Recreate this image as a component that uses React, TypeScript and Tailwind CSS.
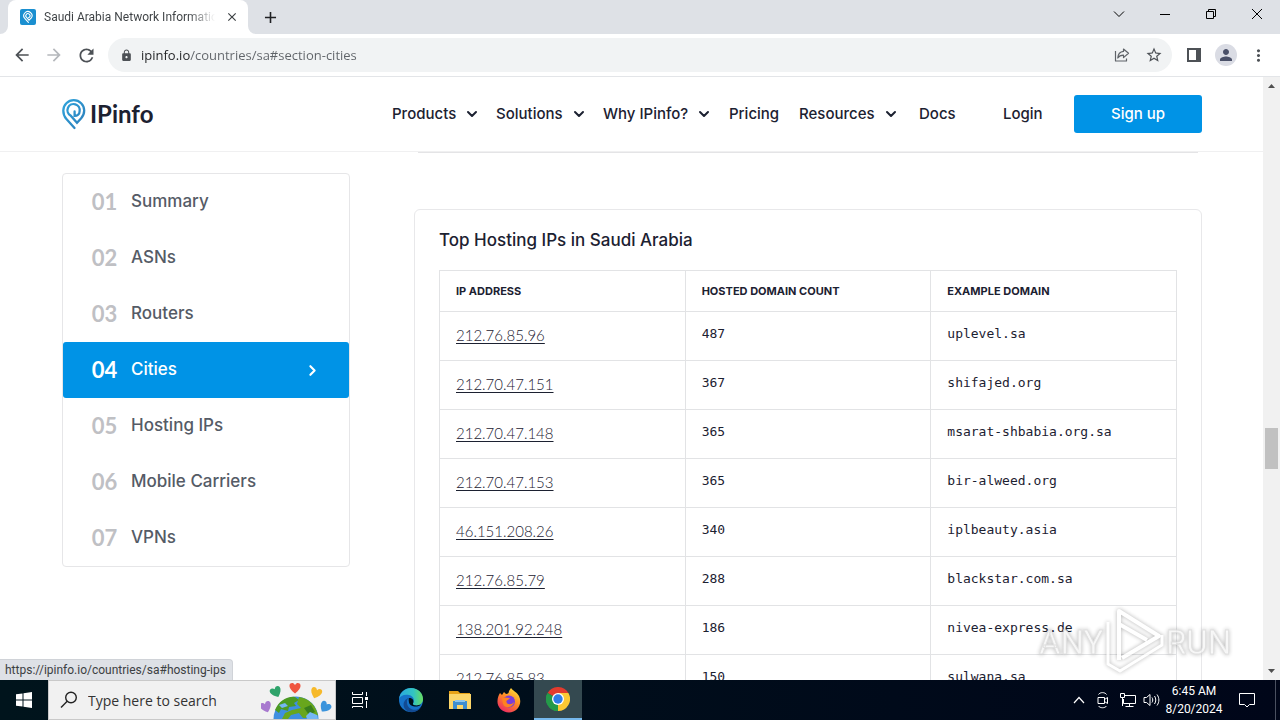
import type { ReactNode } from "react";
import { ChevronDown, ChevronRight } from "lucide-react";
import { MdAdd, MdArrowBack, MdArrowForward, MdClose, MdLock, MdMoreVert, MdPerson, MdRefresh, MdStarBorder } from "react-icons/md";

const navItems = [
    { label: "Products", menu: true, width: "w-[104px]" },
    { label: "Solutions", menu: true, width: "w-[107px]" },
    { label: "Why IPinfo?", menu: true, width: "w-[126px]" },
    { label: "Pricing", menu: false, width: "w-[70px]" },
    { label: "Resources", menu: true, width: "w-[120px]" },
    { label: "Docs", menu: false, width: "w-[84px]" },
    { label: "Login", menu: false, width: "w-[71px]" },
];

const sections = [
    { number: "01", label: "Summary", href: "#section-summary" },
    { number: "02", label: "ASNs", href: "#section-asns" },
    { number: "03", label: "Routers", href: "#section-routers" },
    { number: "04", label: "Cities", href: "#section-cities" },
    { number: "05", label: "Hosting IPs", href: "#hosting-ips" },
    { number: "06", label: "Mobile Carriers", href: "#section-carriers" },
    { number: "07", label: "VPNs", href: "#section-vpns" },
];

const hosts = [
    { ip: "212.76.85.96", count: 487, domain: "uplevel.sa" },
    { ip: "212.70.47.151", count: 367, domain: "shifajed.org" },
    { ip: "212.70.47.148", count: 365, domain: "msarat-shbabia.org.sa" },
    { ip: "212.70.47.153", count: 365, domain: "bir-alweed.org" },
    { ip: "46.151.208.26", count: 340, domain: "iplbeauty.asia" },
    { ip: "212.76.85.79", count: 288, domain: "blackstar.com.sa" },
    { ip: "138.201.92.248", count: 186, domain: "nivea-express.de" },
    { ip: "212.76.85.83", count: 150, domain: "sulwana.sa" },
];

function WindowButton({ label, children }: { label: string; children: ReactNode }) {
    return (
        <button aria-label={label} className="flex h-7 w-[46px] items-center justify-center text-black">
            <svg width="12" height="12" viewBox="0 0 12 12" fill="none" stroke="currentColor">
                {children}
            </svg>
        </button>
    );
}

function TabStrip() {
    return (
        <div className="flex h-[34px] shrink-0 items-start bg-[#dee1e6] pl-2">
            <div className="relative flex h-[34px] w-60 items-center rounded-t-lg bg-white pr-2 pl-3">
                <svg className="absolute bottom-0 -left-2" width="8" height="8"><path d="M8 0V8H0A8 8 0 0 0 8 0Z" fill="#fff" /></svg>
                <svg className="absolute -right-2 bottom-0" width="8" height="8"><path d="M0 0V8H8A8 8 0 0 1 0 0Z" fill="#fff" /></svg>
                <svg width="16" height="16" viewBox="0 0 16 16" fill="none" className="shrink-0">
                    <rect width="16" height="16" rx="2" fill="#1a8fd0" />
                    <path d="M8.4 13.4 5 9.6A4.1 4.1 0 1 1 11.3 9L9 11.2 6.6 8.4A2.1 2.1 0 1 1 9.6 8L8.6 8.6" stroke="#fff" strokeWidth="1.1" strokeLinecap="round" />
                </svg>
                <span className="ml-2 w-[171px] overflow-hidden bg-[linear-gradient(90deg,#3c4043_145px,transparent_171px)] bg-clip-text font-[Roboto,sans-serif] text-xs whitespace-nowrap text-transparent">
                    Saudi Arabia Network Information
                </span>
                <button aria-label="Close tab" className="ml-auto flex size-4 items-center justify-center text-[#3c4043]">
                    <MdClose size={14} />
                </button>
            </div>
            <button aria-label="New tab" className="ml-2 flex h-[34px] w-7 items-center justify-center text-[#202124]">
                <MdAdd size={19} />
            </button>
            <div className="ml-auto flex">
                <WindowButton label="Search tabs"><path d="M1 3.5 6 8.5 11 3.5" /></WindowButton>
                <WindowButton label="Minimize"><path d="M1 6.5H11" /></WindowButton>
                <WindowButton label="Restore"><path d="M1.5 3.5H8.5V10.5H1.5ZM3.5 3.5V1.5H10.5V8.5H8.5" /></WindowButton>
                <WindowButton label="Close"><path d="M1 1 11 11M11 1 1 11" /></WindowButton>
            </div>
        </div>
    );
}

function Toolbar() {
    const button = "flex size-7 shrink-0 items-center justify-center rounded-full text-[#4d5156]";
    return (
        <div className="flex h-[43px] shrink-0 items-center gap-1 border-b border-[#e3e5e8] bg-white px-2">
            <button aria-label="Back" className={button}><MdArrowBack size={20} /></button>
            <button aria-label="Forward" className="flex size-7 shrink-0 items-center justify-center text-[#b5b8bc]"><MdArrowForward size={20} /></button>
            <button aria-label="Reload" className={button}><MdRefresh size={21} /></button>
            <div className="mx-1 flex h-[34px] flex-1 items-center rounded-full bg-[#f1f3f4] pr-0.5 pl-3">
                <MdLock size={13} className="shrink-0 text-[#4d5156]" />
                <input
                    aria-label="Address"
                    defaultValue="ipinfo.io/countries/sa#section-cities"
                    className="ml-2 h-6 min-w-0 flex-1 bg-[linear-gradient(90deg,#202124_49px,#5f6368_49px)] bg-clip-text text-[13px] text-transparent outline-none"
                />
                <button aria-label="Share" className="flex h-7 w-8 items-center justify-center text-[#5f6368]">
                    <svg width="16" height="16" viewBox="0 0 16 16" fill="none" stroke="currentColor" strokeWidth="1.2" strokeLinejoin="round">
                        <path d="M1.5 4V14H12.5V11.5M9.5 2 14.5 6.3 9.5 10.6V8.2C6.8 8.2 5 9 3.8 11 4 7.5 5.8 4.8 9.5 4.4Z" />
                    </svg>
                </button>
                <button aria-label="Bookmark" className="flex h-7 w-8 items-center justify-center text-[#4d5156]"><MdStarBorder size={18} /></button>
            </div>
            <button aria-label="Side panel" className={button}>
                <svg width="14" height="14" viewBox="0 0 14 14"><path d="M0 0H14V14H0ZM2 2V12H9V2Z" fill="currentColor" fillRule="evenodd" /></svg>
            </button>
            <button aria-label="Profile" className={button}>
                <span className="flex size-[22px] items-center justify-center rounded-full bg-[#dadce4] text-[#4a5068]"><MdPerson size={18} /></span>
            </button>
            <button aria-label="Menu" className={button}><MdMoreVert size={19} /></button>
        </div>
    );
}

function Logo() {
    return (
        <a href="#home" className="flex items-center gap-1 font-[Lato,sans-serif] text-2xl font-bold text-[#1c2131]">
            <svg width="24" height="31" viewBox="0 0 24 31" fill="none">
                <defs>
                    <linearGradient id="pin" x1="0" y1="0" x2="1" y2="1">
                        <stop offset="0" stopColor="#2fa4dc" />
                        <stop offset="1" stopColor="#2d7db9" />
                    </linearGradient>
                </defs>
                <path
                    d="M12.5 29 4.2 19.8C1.9 17.2 1.3 14.5 1.3 11.6A10.4 10.4 0 0 1 22.2 11.6C22.2 14.7 21.2 17 19.2 19.2L15 23.7 8.5 16.4A6.1 6.1 0 1 1 17.6 12.2C17.6 15 15.4 16.8 12.6 16.8V12.4"
                    stroke="url(#pin)"
                    strokeWidth="2.3"
                    strokeLinecap="round"
                />
            </svg>
            IPinfo
        </a>
    );
}

function SiteHeader() {
    return (
        <header className="flex h-[75px] items-center border-b border-[#f0f0f1] bg-white pr-[61px] pl-[62px] font-[Inter,sans-serif]">
            <Logo />
            <nav className="ml-auto flex text-[15px] font-medium text-[#1c2131]">
                {navItems.map((item) => (
                    <div key={item.label} className={item.width}>
                        {item.menu ? (
                            <button className="flex items-center gap-2 whitespace-nowrap">
                                {item.label}
                                <ChevronDown size={16} strokeWidth={3} />
                            </button>
                        ) : (
                            <a href={`#${item.label.toLowerCase()}`}>{item.label}</a>
                        )}
                    </div>
                ))}
            </nav>
            <a href="#signup" className="flex h-[38px] w-32 items-center justify-center rounded-[3px] bg-[#0093e6] text-[15px] font-medium text-white">
                Sign up
            </a>
        </header>
    );
}

function SectionNav() {
    return (
        <nav className="mt-[21px] w-72 shrink-0 rounded border border-[#e6e6e8] font-[Inter,sans-serif]">
            {sections.map((section) => {
                const active = section.number === "04";
                return (
                    <a
                        key={section.number}
                        href={section.href}
                        className={active
                            ? "flex h-14 items-center rounded-[3px] bg-[#0093e6] pr-7 pl-[27px] text-white"
                            : "flex h-14 items-center pr-7 pl-[27px] text-[#555b66]"}
                    >
                        <span className={active ? "w-[29px] pb-0.5 text-center font-[Lato,sans-serif] text-[22px] font-bold" : "w-[29px] pb-0.5 text-center font-[Lato,sans-serif] text-[22px] font-bold text-[#bfc0c4]"}>
                            {section.number}
                        </span>
                        <span className="ml-3 text-[17px] font-medium">{section.label}</span>
                        {active && <ChevronRight size={17} strokeWidth={3} className="ml-auto" />}
                    </a>
                );
            })}
        </nav>
    );
}

function HostingTable() {
    const cell = "border border-[#e2e3e5] px-4 align-top";
    return (
        <section className="mt-14 rounded-md border border-[#e8e8ea] px-6 pt-[18px] pb-6">
            <h2 className="mb-[18px] font-[Inter,sans-serif] text-[17px] leading-6 font-medium text-[#1c2131]">Top Hosting IPs in Saudi Arabia</h2>
            <table className="w-full table-fixed border-collapse text-left text-[#1c2131]">
                <thead>
                    <tr className="h-[41px] font-[Inter,sans-serif] text-[11px] uppercase">
                        <th className="border border-[#e2e3e5] px-4 font-bold">IP Address</th>
                        <th className="border border-[#e2e3e5] px-4 font-bold">Hosted Domain Count</th>
                        <th className="border border-[#e2e3e5] px-4 font-bold">Example Domain</th>
                    </tr>
                </thead>
                <tbody>
                    {hosts.map((host) => (
                        <tr key={host.ip} className="h-[49px]">
                            <td className={cell}>
                                <a href={`#${host.ip}`} className="block pt-[11px] font-[Lato,sans-serif] text-[15px] leading-6 font-light underline underline-offset-2">{host.ip}</a>
                            </td>
                            <td className={cell}>
                                <div className="pt-3 font-[DejaVu_Sans_Mono,monospace] text-[13px] leading-5">{host.count}</div>
                            </td>
                            <td className={cell}>
                                <div className="pt-3 font-[DejaVu_Sans_Mono,monospace] text-[13px] leading-5">{host.domain}</div>
                            </td>
                        </tr>
                    ))}
                </tbody>
            </table>
        </section>
    );
}

function ScrollBar() {
    return (
        <div className="flex w-[17px] shrink-0 flex-col items-center bg-[#f1f1f1]">
            <svg width="17" height="17"><path d="M5 11H12L8.5 7Z" fill="#505050" /></svg>
            <div className="grow-[334]" />
            <div className="h-[41px] w-[13px] bg-[#c1c1c1]" />
            <div className="grow-[194]" />
            <svg width="17" height="17"><path d="M5 6H12L8.5 10Z" fill="#505050" /></svg>
        </div>
    );
}

function Watermark() {
    return (
        <div className="pointer-events-none absolute right-[47px] bottom-1 opacity-80">
            <svg width="198" height="70" viewBox="0 0 198 70" fill="none" className="drop-shadow-[0_0_2px_#00000060]">
                <g fill="#fff" fillOpacity="0.8" stroke="#d8d8d8" strokeWidth="0.8" fontFamily="Roboto, sans-serif" fontSize="33">
                    <text x="4" y="48">ANY</text>
                    <text x="131" y="48">RUN</text>
                </g>
                <g stroke="#fff" strokeWidth="4" strokeLinejoin="round">
                    <path d="M84 54V5L124 30 87 52M84 18 112 34" />
                    <path d="M73 16V58L85 65 127 39V29" strokeWidth="3" />
                </g>
            </svg>
        </div>
    );
}

function Heart({ x, y, turn, color }: { x: number; y: number; turn: number; color: string }) {
    return (
        <path
            d="M0 5.5C-4 2.5-6-.5-5.5-3-5-5.5-1.5-6 0-3 1.5-6 5-5.5 5.5-3 6-.5 4 2.5 0 5.5Z"
            transform={`translate(${x} ${y}) rotate(${turn})`}
            fill={color}
        />
    );
}

function EarthDoodle() {
    return (
        <svg width="72" height="38" viewBox="0 0 72 38" className="shrink-0">
            <circle cx="35" cy="38" r="22.5" fill="#3f8fe0" />
            <path d="M14 29C18 20 26 15 34 16L38 19 33 22 35 25 28 26 27 30 20 28 18 32Z" fill="#4c9a22" />
            <path d="M38 16C48 17 55 25 57 34L52 37H42L38 32 30 34 27 38H21L24 32 31 29 40 27 36 23Z" fill="#68a61d" />
            <path d="M43 27 50 24 54 31 48 34Z" fill="#397f1d" />
            <path d="M18 24 24 22 27 25 21 27M45 35 49 31 56 34 57 38H46Z" fill="#75b7f4" />
            <Heart x={34} y={7} turn={0} color="#ef553f" />
            <Heart x={15} y={11} turn={-25} color="#2fa36b" />
            <Heart x={55} y={12} turn={20} color="#f6b92a" />
            <Heart x={5} y={26} turn={-20} color="#a879cf" />
            <Heart x={64} y={26} turn={35} color="#3b94dc" />
        </svg>
    );
}

function EdgeIcon() {
    return (
        <svg width="26" height="26" viewBox="0 0 26 26">
            <defs>
                <linearGradient id="edgeTop" x1="0" y1="0.4" x2="1" y2="0.4">
                    <stop offset="0" stopColor="#2aa8e0" />
                    <stop offset="0.6" stopColor="#32c4c2" />
                    <stop offset="1" stopColor="#69de5e" />
                </linearGradient>
            </defs>
            <circle cx="13" cy="13" r="12" fill="#1673c9" />
            <path d="M1 12C2 5 7 1 13 1 20 1 25 6 25 12 25 16 22 18.5 18.5 18.5 16 18.5 14.5 17.5 15 16.5 17 14 16 9 11 8 6 7 2 9 1 12Z" fill="url(#edgeTop)" />
            <path d="M9 14C8.5 20 13 23.5 19 22.5 21 22 22.5 21 23.5 19.5 20 26 11 27 7 22 4 18 6 12 11 11 9.5 12 9 13 9 14Z" fill="#124b93" />
            <path d="M11 11C14 10.5 16.5 13 15 16.5 14.5 17.5 16 18.5 18.5 18.5L23 17.5C20 21 12 20 11 15.5 10.7 13.5 10.5 12 11 11Z" fill="#001119" />
        </svg>
    );
}

function ExplorerIcon() {
    return (
        <svg width="22" height="20" viewBox="0 0 22 20">
            <path d="M0 1H9L11 3H21V6H0Z" fill="#e8a317" />
            <path d="M0 4H22V19H0Z" fill="#fcd669" />
            <path d="M4 11H18V19H14V15H8V19H4Z" fill="#3e8ed0" />
            <path d="M6 10H16V12H6Z" fill="#8fc7ec" />
        </svg>
    );
}

function FirefoxIcon() {
    return (
        <svg width="24" height="25" viewBox="0 0 24 25">
            <defs>
                <linearGradient id="fox" x1="0.8" y1="0" x2="0.2" y2="1">
                    <stop offset="0" stopColor="#ffe23c" />
                    <stop offset="0.45" stopColor="#ff8b25" />
                    <stop offset="1" stopColor="#ec2267" />
                </linearGradient>
            </defs>
            <path d="M3 5 5 7 7 4 9 6C11 6 12 5 12 3L14 0C16 3 20 4 22 8 26 16 20 24.5 12 24.5 5 24.5 0 19 .5 13 .6 10 1.5 7 3 5Z" fill="url(#fox)" />
            <circle cx="12" cy="13.5" r="6" fill="#7a3ddc" />
            <path d="M5 10C8 9 10 10 13 10 12 12 9 12 9.5 14 10 17 15 17 17 14 16 20 8 21 6 16Z" fill="#ff8220" />
        </svg>
    );
}

function ChromeIcon() {
    return (
        <svg width="24" height="24" viewBox="0 0 24 24">
            <path d="M12 12 1.6 6A12 12 0 0 1 22.4 6Z" fill="#e33b2e" />
            <path d="M12 12 22.4 6A12 12 0 0 1 12 24Z" fill="#fcc934" />
            <path d="M12 12V24A12 12 0 0 1 1.6 6Z" fill="#249a49" />
            <path d="M12 6H22.4L17.2 15 12 24 14 15Z" fill="#fcc934" />
            <path d="M1.6 6 7 15 12 18V24A12 12 0 0 1 1.6 6Z" fill="#249a49" />
            <circle cx="12" cy="12" r="6" fill="#fff" />
            <circle cx="12" cy="12" r="4.7" fill="#2f7de8" />
        </svg>
    );
}

function Taskbar() {
    const app = "flex h-10 w-12 items-center justify-center";
    return (
        <footer className="flex h-10 shrink-0 items-center bg-linear-to-r from-[#00141c] to-[#000619] text-white">
            <button aria-label="Start" className={app}>
                <svg width="16" height="16" viewBox="0 0 16 16"><path d="M0 2.3 6.5 1.4V7.5H0ZM7.5 1.2 16 0V7.5H7.5ZM0 8.5H6.5V14.6L0 13.7ZM7.5 8.5H16V16L7.5 14.8Z" fill="#fff" /></svg>
            </button>
            <div className="flex h-10 w-72 items-center border border-[#c9c9c9] bg-[#f1f1f1] pl-[11px] text-[#222]">
                <svg width="18" height="18" viewBox="0 0 18 18" fill="none" stroke="currentColor" strokeWidth="1.4" className="shrink-0">
                    <circle cx="11" cy="6.5" r="5.3" />
                    <path d="M7.2 10.3 1 16.5" />
                </svg>
                <input aria-label="Search" placeholder="Type here to search" className="ml-2.5 w-0 flex-1 text-[14px] outline-none placeholder:text-[#333]" />
                <EarthDoodle />
                <span className="w-0.5" />
            </div>
            <button aria-label="Task view" className={app}>
                <svg width="18" height="18" viewBox="0 0 18 18" fill="none" stroke="#fff">
                    <path d="M1.5 1V3.5H11.5V1M1.5 6.5H11.5V12.5H1.5ZM1.5 17V15.5H11.5V17M15.5 1V5M15.5 10V17" />
                    <path d="M14 6H17V9H14Z" fill="#fff" stroke="none" />
                </svg>
            </button>
            <div className="ml-[3px] flex gap-px">
                <button aria-label="Microsoft Edge" className={app}><EdgeIcon /></button>
                <button aria-label="File Explorer" className={app}><ExplorerIcon /></button>
                <button aria-label="Firefox" className={app}><FirefoxIcon /></button>
                <button aria-label="Google Chrome" className="flex h-10 w-12 items-center justify-center border-b-2 border-[#76b9ed] bg-[#344950]"><ChromeIcon /></button>
            </div>
            <div className="ml-auto flex items-center">
                <button aria-label="Show hidden icons" className="flex w-6 justify-center">
                    <svg width="12" height="8" fill="none" stroke="#fff" strokeWidth="1.2"><path d="M1 7 6 1.5 11 7" /></svg>
                </button>
                <button aria-label="Meet now" className="flex w-6 justify-center">
                    <svg width="14" height="18" viewBox="0 0 14 18" fill="none" stroke="#fff">
                        <path d="M2 6.5H8.5V12.5H2ZM8.5 8.5 11.5 6.5V12.5L8.5 10.5M2.5 3.5C4 1 9 1 10.5 3.5M2.5 15C4 17.3 9 17.3 10.5 15" />
                    </svg>
                </button>
                <button aria-label="Network" className="flex w-6 justify-center">
                    <svg width="17" height="16" viewBox="0 0 17 16" fill="none" stroke="#fff">
                        <path d="M5.5 3.5H16.5V11.5H4.5V7M10.5 11.5V14M6.5 14.5H14.5M1.5 1.5H5.5V5.5H1.5ZM3.5 5.5V14" />
                    </svg>
                </button>
                <button aria-label="Volume" className="flex w-6 justify-center">
                    <svg width="17" height="14" viewBox="0 0 17 14" fill="none" stroke="#fff">
                        <path d="M1 4.5H3.5L7 1.5V12.5L3.5 9.5H1ZM9 4.5C10 6 10 8 9 9.5M11.5 3C13.2 5.5 13.2 8.5 11.5 11M14 1.5C16.5 5 16.5 9 14 12.5" />
                    </svg>
                </button>
                <div className="w-[62px] text-center font-[Roboto,sans-serif] text-xs leading-[18px]">
                    <div>6:45 AM</div>
                    <div>8/20/2024</div>
                </div>
                <button aria-label="Notifications" className="flex w-11 justify-center">
                    <svg width="18" height="18" viewBox="0 0 18 18" fill="none" stroke="#fff"><path d="M1.5 2.5H16.5V13.5H11.5L9 16 6.5 13.5H1.5Z" /></svg>
                </button>
                <span className="ml-1.5 h-10 w-[5px] border-l border-[#4a5060]" />
            </div>
        </footer>
    );
}

export default function App() {
    return (
        <div className="flex h-screen flex-col overflow-hidden bg-white font-[Open_Sans,sans-serif]">
            <TabStrip />
            <Toolbar />
            <div className="relative flex min-h-0 flex-1">
                <main className="min-w-0 flex-1 overflow-hidden">
                    <SiteHeader />
                    <div className="flex items-start gap-16 pr-[61px] pl-[62px]">
                        <SectionNav />
                        <div className="min-w-0 flex-1">
                            <div className="mx-1 h-px bg-[#e4e4e6]" />
                            <HostingTable />
                        </div>
                    </div>
                </main>
                <ScrollBar />
                <Watermark />
                <div className="absolute bottom-0 left-0 h-[21px] rounded-tr border-t border-r border-[#d0d3d8] bg-[#dee1e6] pr-1.5 pl-[5px] font-[Roboto,sans-serif] text-xs leading-5 text-[#3c4043]">
                    https://ipinfo.io/countries/sa#hosting-ips
                </div>
            </div>
            <Taskbar />
        </div>
    );
}
